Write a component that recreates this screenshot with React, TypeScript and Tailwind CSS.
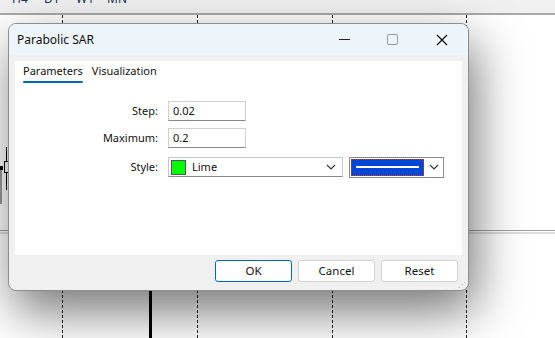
import React from "react";

const gridX = [62, 197, 332, 466];

const Chevron = () => (
	<svg width="10" height="6" viewBox="0 0 10 6" fill="none" aria-hidden="true">
		<path d="M1 1 5 5 9 1" stroke="#333" strokeWidth="1.1" />
	</svg>
);

const Field = ({ label, value }: { label: string; value: string }) => (
	<div className="flex items-center h-[20px]">
		<span className="w-[153px] pr-[10px] text-right">{label}</span>
		<div className="w-[78px] h-[20px] border border-[#d0d0d0] border-b-[#8a8a8a] flex items-center pl-[4px] bg-white">
			{value}
		</div>
	</div>
);

const DialogButton = ({ label, primary }: { label: string; primary?: boolean }) => (
	<button
		className={
			"w-[77px] h-[22px] rounded-[3px] bg-white text-[11.5px] text-[#111] " +
			(primary ? "border border-[#0067c0]" : "border border-[#d2d2d2]")
		}
	>
		{label}
	</button>
);

export default function App() {
	return (
		<div
			className="relative w-[555px] h-[338px] overflow-hidden bg-white text-[11px] text-[#111]"
			style={{ fontFamily: '"Noto Sans", "Open Sans", sans-serif' }}
		>
			{/* timeframe strip */}
			<div className="relative h-[15px] bg-[#f0f0f0] border-b-2 border-[#a8a8a8]">
				<div className="absolute left-[12px] top-[-10px] flex text-[12px] text-[#24335a]">
					<span className="w-[32px]">H4</span>
					<span className="w-[32px]">D1</span>
					<span className="w-[31px]">W1</span>
					<span className="w-[32px]">MN</span>
				</div>
			</div>

			{/* chart canvas */}
			{gridX.map((x) => (
				<div
					key={x}
					className="absolute top-[15px] bottom-0 border-l border-dashed border-[#222]"
					style={{ left: x }}
				/>
			))}
			<div className="absolute left-0 right-0 top-[230px] h-[1px] bg-[#a0a0a0]" />
			<div className="absolute left-0 right-0 top-[232px] h-[2px] bg-[#dedede]" />
			<div className="absolute left-[149px] top-[290px] bottom-0 w-[3px] bg-black" />
			<div className="absolute left-[6px] top-[147px] h-[43px] w-[1px] bg-black" />
			<div className="absolute left-[4px] top-[161px] h-[12px] w-[5px] border border-black bg-white" />
			<div className="absolute left-0 top-[166px] h-[4px] w-[3px] bg-black" />
			<div className="absolute left-0 top-[170px] h-[34px] w-[2px] bg-[#999]" />

			{/* dialog window */}
			<div className="absolute left-[8px] top-[23px] w-[461px] h-[268px] rounded-[8px] border border-[#8d8d8d] bg-[#f0f0f0] overflow-hidden shadow-[6px_20px_50px_rgba(0,0,0,0.55)]">
				<div className="flex items-center h-[31px] bg-[#edf5fa] pl-[8px]">
					<span className="flex-1 text-[12px]">Parabolic SAR</span>
					<div className="flex items-center h-full">
						<div className="w-[48px] flex justify-center">
							<div className="w-[11px] h-[1px] bg-[#222]" />
						</div>
						<div className="w-[48px] flex justify-center">
							<div className="w-[11px] h-[11px] border border-[#999] rounded-[2px]" />
						</div>
						<div className="w-[52px] flex justify-center">
							<svg width="12" height="12" viewBox="0 0 12 12" aria-hidden="true">
								<path d="M1 1 11 11M11 1 1 11" stroke="#111" strokeWidth="1.3" />
							</svg>
						</div>
					</div>
				</div>

				<div className="mx-[6px] mt-[6px] h-[194px] bg-white">
					<div className="flex gap-[9px] pl-[8px] pt-[1px]">
						<div className="flex flex-col">
							<span className="leading-[18px]">Parameters</span>
							<div className="mt-[1px] h-[2px] rounded bg-[#0067c0]" />
						</div>
						<span className="leading-[18px]">Visualization</span>
					</div>

					<div className="flex flex-col gap-[7px] pt-[18px]">
						<Field label="Step:" value="0.02" />
						<Field label="Maximum:" value="0.2" />
						<div className="flex items-center h-[20px] mt-[2px]">
							<span className="w-[153px] pr-[10px] text-right">Style:</span>
							<div className="w-[175px] h-[20px] border border-[#c8c8c8] border-b-[#8a8a8a] flex items-center pl-[2px] pr-[6px] bg-white">
								<div className="w-[15px] h-[15px] border border-[#555] bg-[#00ff00]" />
								<span className="flex-1 pl-[6px]">Lime</span>
								<Chevron />
							</div>
							<div className="ml-[6px] w-[95px] h-[21px] border border-[#8a8a8a] flex items-center bg-white">
								<div className="ml-[1px] w-[73px] h-[17px] bg-[#0047d6] border border-dotted border-[#e03010] flex items-center px-[4px]">
									<div className="w-full h-[2px] bg-white" />
								</div>
								<div className="flex-1 flex justify-center">
									<Chevron />
								</div>
							</div>
						</div>
					</div>
				</div>

				<div className="flex justify-end gap-[6px] pr-[10px] pt-[5px]">
					<DialogButton label="OK" primary />
					<DialogButton label="Cancel" />
					<DialogButton label="Reset" />
				</div>
				<div className="absolute right-[2px] bottom-[2px] text-[8px] leading-none text-[#aaa]">⋰</div>
			</div>
		</div>
	);
}
